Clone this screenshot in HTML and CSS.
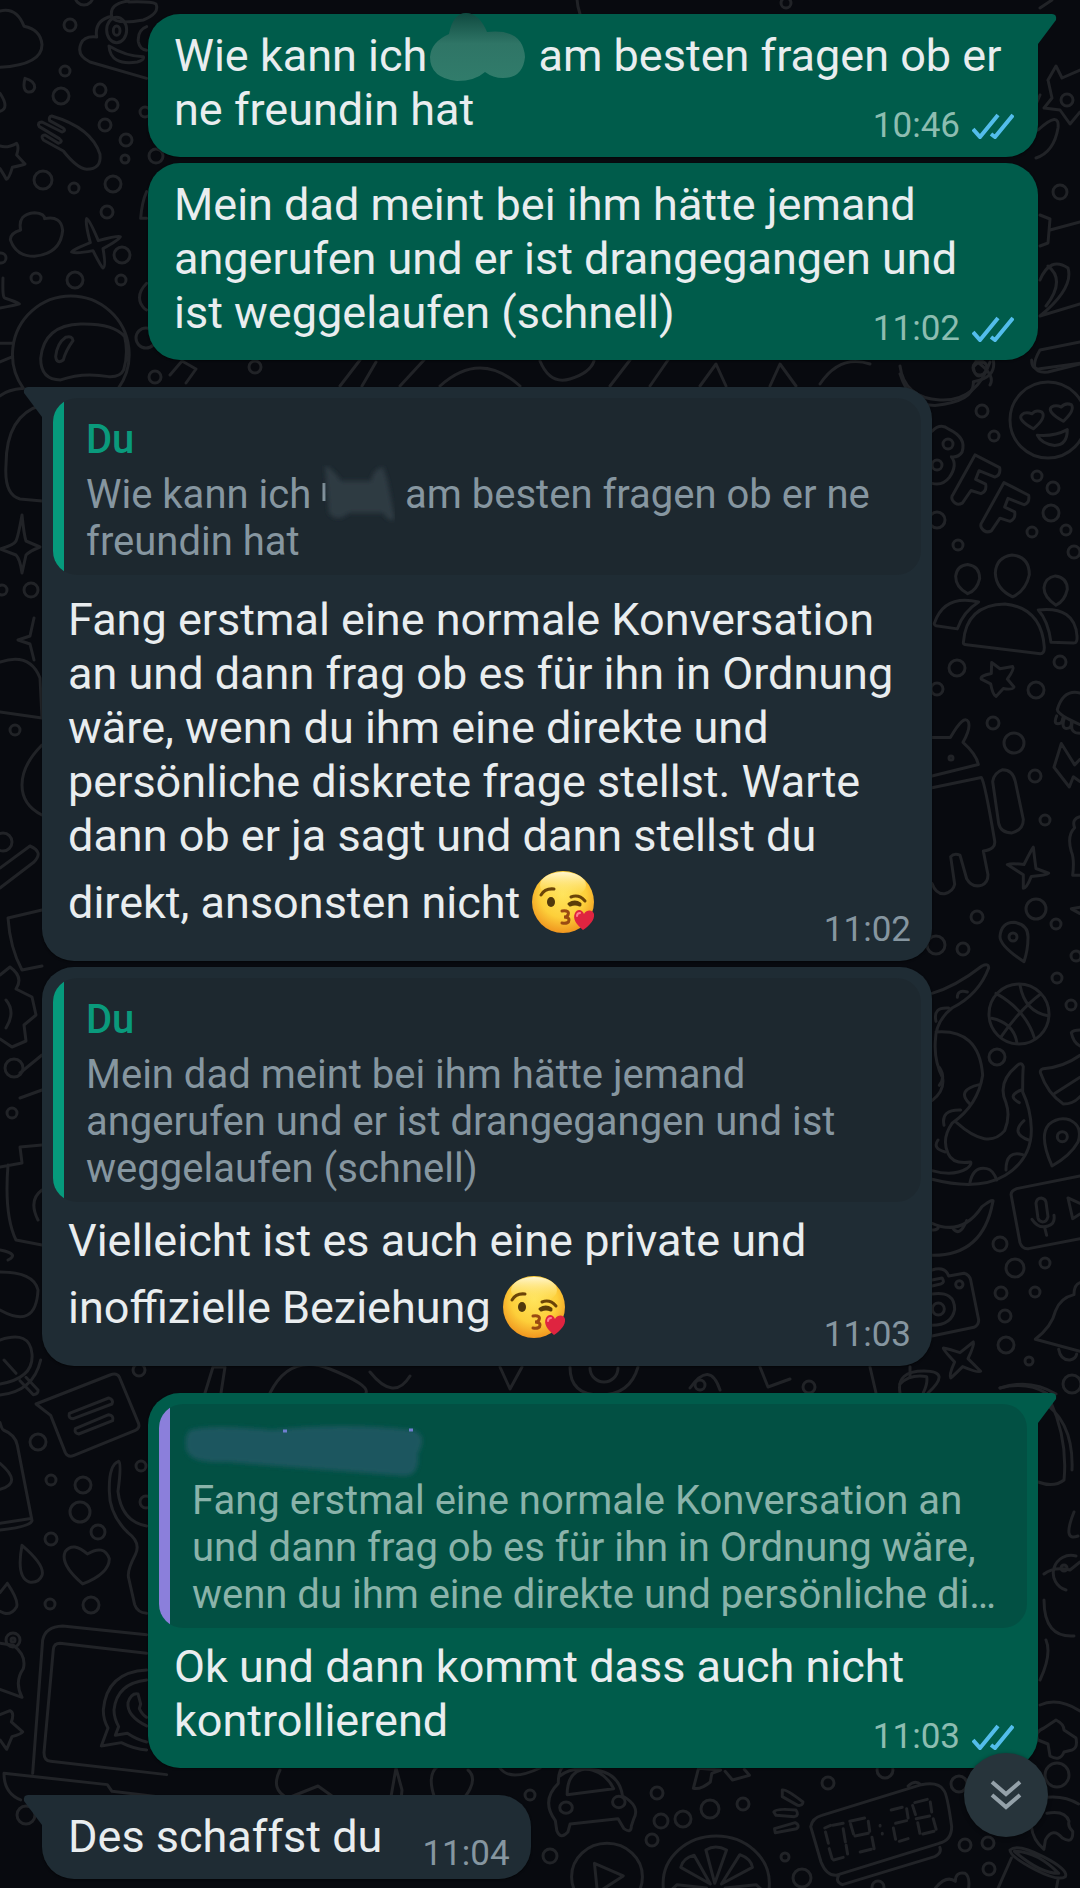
FILE: index.html
```html
<!DOCTYPE html>
<html lang="de">

<head>
    <meta charset="UTF-8"/>
    <meta name="viewport" content="width=device-width, initial-scale=1"/>
    <title>Chat</title>
    <link rel="stylesheet" href="styles.css">
</head>

<body>
<!-- shared icons -->
<svg class="defs" aria-hidden="true">
    <defs>
        <radialGradient id="face" cx="50%" cy="38%" r="62%">
            <stop offset="0" stop-color="#ffe45c"/>
            <stop offset="0.6" stop-color="#fdcf3a"/>
            <stop offset="1" stop-color="#f0961f"/>
        </radialGradient>
        <linearGradient id="shine" x1="0" y1="0" x2="0" y2="1">
            <stop offset="0" stop-color="#fff6cf"/>
            <stop offset="1" stop-color="#ffe45c" stop-opacity="0"/>
        </linearGradient>
        <filter id="soft" x="-10%" y="-20%" width="120%" height="140%">
            <feGaussianBlur stdDeviation="2"/>
        </filter>
        <linearGradient id="smear" x1="0" y1="0" x2="0" y2="1">
            <stop offset="0" stop-color="#0f4a40"/>
            <stop offset="0.45" stop-color="#2f7566"/>
            <stop offset="1" stop-color="#317c6b"/>
        </linearGradient>
    </defs>
    <symbol id="kiss" viewBox="0 0 64 64">
        <circle cx="32" cy="32" r="31" fill="url(#face)"/>
        <ellipse cx="32" cy="15" rx="23" ry="13" fill="url(#shine)"/>
        <path d="M10 25q4-7 13-6M40 27q8-3 14 4" fill="none" stroke="#6b4408" stroke-width="3" stroke-linecap="round"/>
        <ellipse cx="20" cy="32" rx="4" ry="5" fill="#50380c"/>
        <path d="M38 34q6-4 11 0M39 35q5-2 10 0" fill="none" stroke="#5c3d08" stroke-width="3" stroke-linecap="round"/>
        <path d="M31 41q8-1 6 4q-1 2-4 2q5 0 5 3q0 4-7 3" fill="none" stroke="#9a4a12" stroke-width="3" stroke-linecap="round"/>
        <path d="M52 60C46 55 41 49 44 43c2-4 7-4 9 1 3-5 9-4 10 0 1 6-5 12-11 16z" fill="#df2440"/>
        <path d="M46 46q0-3 3-3" fill="none" stroke="#ff8090" stroke-width="2" stroke-linecap="round"/>
    </symbol>
    <symbol id="read" viewBox="0 0 42 26">
        <path d="M1 16l7 8L26 2M19 21l4 3L41 2" fill="none" stroke="#53bdeb" stroke-width="4"/>
    </symbol>
</svg>

<main class="chat">
    <svg class="wallpaper" viewBox="0 0 1080 1888" preserveAspectRatio="xMidYMin slice" aria-hidden="true">
        <!-- dots -->
        <g>
            <circle cx="70" cy="25" r="6"/><circle cx="65" cy="71" r="5"/><circle cx="61" cy="96" r="8"/>
            <circle cx="84" cy="-4" r="9"/><circle cx="100" cy="90" r="6"/><circle cx="112" cy="105" r="6"/>
            <circle cx="105" cy="125" r="6"/><circle cx="126" cy="140" r="6"/><circle cx="125" cy="159" r="4"/>
            <circle cx="156" cy="156" r="7"/><circle cx="43" cy="180" r="9"/><circle cx="74" cy="188" r="5"/>
            <circle cx="113" cy="184" r="8"/><circle cx="107" cy="212" r="6"/><circle cx="122" cy="255" r="8"/>
            <circle cx="36" cy="278" r="5"/><circle cx="75" cy="280" r="8"/><circle cx="121" cy="280" r="5"/>
            <circle cx="146" cy="338" r="10"/><circle cx="155" cy="377" r="6"/><circle cx="1" cy="258" r="5"/>
            <circle cx="255" cy="367" r="6"/><circle cx="145" cy="112" r="5"/><circle cx="786" cy="3" r="5"/>
            <circle cx="1067" cy="100" r="6"/><circle cx="1060" cy="192" r="7"/><circle cx="980" cy="368" r="7"/>
            <circle cx="982" cy="411" r="6"/><circle cx="994" cy="436" r="5"/><circle cx="1037" cy="476" r="5"/>
            <circle cx="1053" cy="488" r="6"/><circle cx="1051" cy="513" r="8"/><circle cx="1032" cy="532" r="5"/>
            <circle cx="1066" cy="530" r="5"/><circle cx="1074" cy="552" r="6"/><circle cx="958" cy="545" r="5"/>
            <circle cx="937" cy="520" r="8"/><circle cx="1060" cy="662" r="6"/><circle cx="957" cy="668" r="8"/>
            <circle cx="1036" cy="690" r="8"/><circle cx="937" cy="689" r="6"/><circle cx="993" cy="723" r="6"/>
            <circle cx="1014" cy="743" r="10"/><circle cx="1035" cy="776" r="6"/><circle cx="1045" cy="820" r="5"/>
            <circle cx="1036" cy="909" r="10"/><circle cx="977" cy="917" r="6"/><circle cx="1056" cy="924" r="5"/>
            <circle cx="936" cy="945" r="9"/><circle cx="963" cy="949" r="6"/><circle cx="1076" cy="956" r="5"/>
            <circle cx="948" cy="444" r="5"/><circle cx="937" cy="465" r="5"/><circle cx="951" cy="758" r="2"/>
            <circle cx="1013" cy="937" r="4"/><circle cx="1057" cy="978" r="5"/><circle cx="1071" cy="1005" r="5"/>
            <circle cx="997" cy="1057" r="8"/><circle cx="1000" cy="1244" r="7"/><circle cx="1015" cy="1268" r="9"/>
            <circle cx="1045" cy="1263" r="5"/><circle cx="1035" cy="1292" r="5"/><circle cx="1001" cy="1293" r="6"/>
            <circle cx="1005" cy="1316" r="6"/><circle cx="1006" cy="1345" r="8"/><circle cx="1029" cy="1361" r="4"/>
            <circle cx="1072" cy="1384" r="9"/><circle cx="31" cy="590" r="7"/><circle cx="15" cy="730" r="5"/>
            <circle cx="3" cy="842" r="9"/><circle cx="2" cy="590" r="5"/><circle cx="14" cy="1068" r="9"/>
            <circle cx="12" cy="1113" r="5"/><circle cx="139" cy="1370" r="6"/><circle cx="38" cy="1442" r="8"/>
            <circle cx="51" cy="1480" r="5"/><circle cx="83" cy="1485" r="8"/><circle cx="80" cy="1512" r="10"/>
            <circle cx="98" cy="1532" r="7"/><circle cx="51" cy="1539" r="6"/><circle cx="50" cy="1604" r="5"/>
            <circle cx="91" cy="1605" r="8"/><circle cx="141" cy="1466" r="5"/><circle cx="146" cy="1502" r="6"/>
            <circle cx="13" cy="1640" r="7"/><circle cx="13" cy="1640" r="2"/><circle cx="26" cy="1815" r="9"/>
            <circle cx="530" cy="1795" r="5"/><circle cx="657" cy="1793" r="6"/><circle cx="661" cy="1821" r="7"/>
            <circle cx="683" cy="1819" r="8"/><circle cx="710" cy="1809" r="9"/><circle cx="743" cy="1804" r="6"/>
            <circle cx="652" cy="1840" r="6"/><circle cx="550" cy="1856" r="7"/><circle cx="785" cy="1857" r="4"/>
            <circle cx="828" cy="1783" r="6"/><circle cx="802" cy="1878" r="9"/><circle cx="885" cy="1770" r="8"/>
            <circle cx="959" cy="1784" r="8"/><circle cx="965" cy="1845" r="6"/><circle cx="988" cy="1843" r="6"/>
            <circle cx="989" cy="1869" r="6"/><circle cx="1057" cy="1775" r="12"/><circle cx="809" cy="1387" r="6"/>
            <circle cx="700" cy="1385" r="5"/><circle cx="1064" cy="1568" r="3"/><circle cx="878" cy="1887" r="6"/>
        </g>
        <!-- top left: cloud, hand, sparkle, astronaut -->
        <g transform="scale(0.3333)">
            <path d="M0 33q50-12 72 46q50 10 54 55q0 60-126 68M0 280q30 45 0 54M75 235q30 8 29 28q-4 15-20 13q-18-5-9-41z"/>
            <path d="M440 235L270 186q-42-20-27-55q10-24 47-20q-8-50 45-62q-8-38 50-46M335 50q10 25 95 10q50-20 38-48q-14-8-82-6M327 138q4 60 85 48q22-6 18-16q-50 0-103-32zM440 80q-28 10-25 45q4 22 25 26"/>
            <ellipse cx="350" cy="90" rx="30" ry="38"/><ellipse cx="350" cy="92" rx="10" ry="14"/>
            <path d="M155 348q120 35 145 115q5 45-40 45q-30-4-70-55l-60-33q-10-14 5-15l40 25q16-4 3-14l-60-36q-8-14 8-14l60 30q14-4 3-12l-40-22q-4-12 6-14z"/>
            <path d="M0 438q20 8 50-8q8 10 0 35l25 27q-10 4-38 10q-10 35-18 36q-6-12-19-32"/>
            <path d="M260 656q8 2 35 66q60-16 66-12q-4 10-52 36q10 55 0 58q-6-4-30-52q-50 10-64 4q6-8 56-28q-16-60-11-72z"/>
            <path d="M62 690q-10-48 42-52q30 2 30 18q50-10 54 35q-6 70-85 78q-55 0-72-50q0-20 31-29zM9 834q-2 60 5 60q36 12 44 18q-10 4-58 12"/>
            <path d="M70 1165a175 175 0 1 1 285 0M182 1140q-60 0-60-65q10-100 120-103q100-2 132 38q12 50-3 100q-10 22-45 20q-80-14-144 10zM190 1080q-20 14-23-10q4-40 30-58q20-6 22 10q-22 30-29 58zM40 1030H0M38 1070L0 1086M70 1165Q20 1170 0 1188M440 575q-14 30-18 80h18M440 850q-30 30-18 60q10 18 18 20"/>
        </g>
        <!-- top right: stars, controller -->
        <path d="M1048 80l8-14 6 12 18-8M1048 80l4 18-8 10 16 2 10 14 10-12M1040 8l12-8M1038 130q22-20 20-2q-4 24-22 30M1040 215l10 4-2 24-8 3M1050 230l30-8M1040 280q10-24 28-12 6 20-28 48l40-12M1040 350l40-8M1040 350q-14 24 8 22l32-8M1040 95l-6 14M1048 266q18 14-2 40M580 14q-10-30 14-34"/>
        <!-- strips between the bubbles -->
        <path d="M170 375l12-14 14 8-10 14M340 386l20-26M362 386l14-24M400 386l24-26M440 386q40-36 80 0M540 361q10 24 30 18t24-18M610 386l20-26M650 386l18-26M700 386l16-22 10 22M770 386l10-22 16 22M820 384q20-30 50-20M900 366q4 32 40 34t50-38M976 361q20 14 14 24"/>
        <path d="M205 1393l8-26h12l-4 26M270 1393q20-40 60-24t36 24M370 1372q24 30 40 4M500 1367l10 22 12-22M570 1367q0 28 30 28t38-28M590 1368a14 14 0 0 0 28 0M690 1388q20-28 30 2M760 1367l8 20 22-8M870 1367l6 26M900 1393q-4-22 24-22t4 22M1000 1388q30-10 56 6"/>
        <!-- right side: smiley, BFF, group, robot -->
        <circle cx="1048" cy="420" r="38"/>
        <g transform="translate(900 360) scale(0.3333 0.3954)">
            <path d="M0 35q30 80 105 80q120-10 115-60q70-10 60-55M220 18q16-18 35-10q14 10-5 28q-24 14-30-18zM395 0q0 26 25 22L540 8"/>
            <path d="M400 174q-50-24-34-36q10-8 30-2q12-12 30-4q14 14-26 42zM490 155q-50-24-36-36q14-6 30 0q12-12 30-6q12 14-24 42zM412 190q50 4 90-14q0 40-38 40q-40-4-52-26z"/>
            <path d="M96 180q26-22 50-5q55 22 40 58q-10 14-32 12q20 20-6 52q-20 22-52 15"/>
            <path d="M225 240l74 32q4 20-14 24l-48-16-10 22 30 12q4 18-14 24l-30-8-26 32q-18 8-30-8q-4-8 2-14zM312 310l74 32q4 20-14 24l-48-16-10 22 30 12q4 18-14 24l-30-8-26 32q-18 8-30-8q-4-8 2-14z"/>
            <path d="M336 493q52 4 52 50q-10 40-50 56q-50-20-52-60q2-40 50-46zM203 517q36 4 36 36q-8 30-36 38q-36-16-36-44q4-28 36-30zM466 546q36 4 36 34q-8 30-34 40q-36-20-36-44q4-26 34-30z"/>
            <path d="M190 715q8-96 125-98q110 10 118 110q0 16-12 16L200 720q-10 0-10-5zM172 680l-64-8q-8-4-4-8q30-72 132-52q-46 24-64 68zM415 632q110-10 116 66q2 18-10 18l-68-2q-8-54-38-82z"/>
            <path d="M275 765l25 16 38-6q6 6-16 32l20 20q-4 8-32 4l-22 20q-10-4-16-32l-28-12q-6-8 30-14z"/>
            <path d="M96 955h55q40-60 54-40q8 16-16 52q40 30 46 56L96 1052M96 1082l148-26q10 10 40 160q4 22-34 26l14 60q0 20-18 26q-30 8-46-16l-20-60q-18-6-28 4l12 70q-4 18-30 24q-26 2-38-26M278 1066q4-22 30-30q30 0 38 30l24 96q0 26-34 34q-34 0-40-24z"/>
            <path d="M400 1232q6 44 8 54l38 12q-8 6-52 8q-14 30-24 30v-34l-48-26q12-4 50 0q20-34 28-44zM372 1522q-72-40-72-64q4-36 42-36q44 6 42 40q0 30-12 60z"/>
            <path d="M540 842q-50-10-68 42q2 14 68 38M470 900q-10 20 4 20t14-14M492 908q-8 24 8 24t14-18M516 920q-6 24 24 24M540 1066l-20-12-12 26-46-50 22-60 40 54 16-14M540 1155q-26 6-16 28q-24 20-10 60q10 20 4 60h22M540 1384l-26 4 26 12"/>
        </g>
        <!-- right side: octopus, ball, voice note, camera, bell -->
        <circle cx="1019" cy="1014" r="30"/>
        <g transform="translate(900 960) scale(0.3333)">
            <path d="M360 75q14 80 84 92M288 100q90 50 116 136M302 232q60-86 120-130M275 175q66 14 76 74"/>
            <path d="M96 100q70-20 150-82q20-10 20 6q-30 80-110 120q-50 40-50 100q-4 60 22 110q6 40-32 68M108 216q130-10 140 130q-14 90-92 144q-32 46-12 90q14 34 68 26q4 8-12 20q-40 24-104 6M96 658q140 36 220-12q80-50 78-140q-2-60-26-110q0-60 2-76q-6-16-20-2q-60 50-32 110q14 40-4 84q-50 60-144-24"/>
            <path d="M108 184q-10-44 38-40M172 112q0-24 30-16M208 430q-40-40 30-56M132 496q-10-48 50-46M136 576q-40-10-22-36M358 428q-40-20 6-38M386 540q-56-20-14-58M318 630q0-60 50-46M210 668q10-50 50-42q20 4 30 34M118 322q20 30 0 54"/>
            <path d="M96 790q90 40 150-50q40-30 32-12q-30 160-182 158M158 804q20 30 42-22M96 810q18 2 20-12M96 930q40-12 50 18l46-8q16 4 20 20l24 120q0 16-14 22L96 1128M96 960l30-6q10 14-4 18l-26 6M96 1002q68-10 68 46q-8 48-68 48"/>
            <circle cx="115" cy="1047" r="18"/><circle cx="178" cy="973" r="11"/>
            <path d="M130 1164q20 4 50 14l40-32q4 8-16 50l38 38q-6 6-54-14q-30 30-36 34q-6-8 12-48q-34-36-34-42z"/>
            <path d="M540 286q-50 36-110 40q-12 4-8 14q20 60 68 92q30 0 50-22M465 400l75-48M540 210q-20 0-26 8q6 30 26 40M456 618q-40-90-10-124q30-26 64-14q40 20 24 66q-22 40-78 72z"/>
            <circle cx="487" cy="530" r="15"/>
            <path d="M540 648l-190 38q-20 8-16 22l26 140q6 20 26 18l154-30M504 714l14 62 22-14M504 714l36 16M408 730q2-16 16-16q12 2 14 12l6 44q-4 16-16 16q-12-2-14-12zM396 778q20 30 48 20q22-6 18-32M434 802l6 24"/>
            <path d="M540 1174l-134-36q50-40 60-84q14-40 56-50q0-30 18-36M476 1168q6 34 34 32q18-4 20-18M0 1272q30-30 80-22q4 20-10 48M30 1220v30M300 1284q80-20 140 16"/>
        </g>
        <!-- left edge, middle -->
        <path d="M42 405q-36 10-36 60q-2 30 14 34l22 2M22 515q2 20 4 26l14 6q-10 4-14 8l-4 18q-2-14-6-18l-16-6q14-4 16-8t6-26M0 662q30-10 40 16l2 40L0 712M42 745q-20 20-20 40t20 30M34 618l-4 18-12 4 12 4 4 16M0 868l30-22q14 6 4 16L0 888M42 910l-34 8q2 30 14 52l20-4M0 975l10-8q14 10 6 22l16 8 4 18-12 10 2 16-14 6-12-8M6 1000q10 12 0 28M42 1055l-22 18M42 1090l-22 8M42 1145l-22 2 2 16-22 4M8 1165q-4 50 8 75l26 5M42 1190q-14 10-4 30M0 1250q20 4 8 10M0 1272q34 0 38 18-2 40-38 20M0 1340q30-10 32 14t-32 30"/>
        <!-- bottom left: note, drops, heart, laptop -->
        <g transform="translate(0 1360) scale(0.3333)">
            <path d="M108 132L330 45q20-8 28 6l58 140q4 14-10 20L222 286q-18 8-26-8L152 166zM208 160l118-46q16 4 10 18l-116 44q-16 0-12-16zM226 206l100-42q16 2 12 18l-102 40q-14-2-10-16z"/>
            <path d="M0 105q100-10 122-105M12 0l36 40M60 62l40 42q16-2 14-14L78 52M0 188q6 20 10 22q36 14 42 46l44 226q-4 18-96 28M0 490l88-14M0 310q70 60 0 78"/>
            <path d="M356 304q10 2-2 90q10 90 86 104M356 304q-30 10-28 90q0 70 56 124q40 30 22 66q-26 50-20 70l18 80q8 24 36 26"/>
            <path d="M66 556q70 60 60 90q-10 24-38 20q-40-14-22-110zM22 670q34 50 28 70q-14 24-36 20L0 754M22 670L0 698M248 672q-70-60-52-98q24-30 66 8q50-30 66 14q0 44-80 76z"/>
            <path d="M0 850l40 6q40 30 30 70q-28 40-4 86l-66-24M0 1064l30-12q14 6 4 34l34 30q-4 6-32 14l-16 38-20-28"/>
            <path d="M98 1240l30-400q8-40 60-42L440 824M440 880L180 850q-18 0-20 18l-28 310q0 24 20 26L500 1244M12 1240l310 34 14 20 200 24M12 1240q0 60 50 80"/>
            <path d="M440 930q-120 6-130 120q0 30 14 54l-20 54 60-10q40 20 76 22M440 960q-90 10-98 90q0 24 14 50l-10 26 36-6q30 20 58 26M440 1098q-60-30-56-70q10-30 30-26q8 30 8 30l-4 14q10 20 22 26"/>
        </g>
        <!-- bottom: cloud, heart, car, clock, orange -->
        <path d="M280 1770q-10 20 8 28l30-12 14 10 22 28h40M320 1830q-4-36 18-30q20 4 46 30M396 1768l-8 46 12-4 2-20zM444 1818q-22-40-6-52M444 1818q40-34 24-48M500 1768q10 14 40 0"/>
        <g transform="translate(500 1750) scale(0.369 0.3333)">
            <path d="M162 78q30-26 70-20q90 0 100 80q50 30 30 70l-6 20q0 24-20 8l-16-30-130 16-6 24q-20 24-30-4l-4-30q-40-60 8-112q0-40 14-52M182 134q0-74 54-78q50 10 72 60zM524 115l14-60 60 5-24 10-4 26q-26 24-46 19zM610 64l20 26 46-14-14-18"/>
            <circle cx="179" cy="173" r="17"/><circle cx="322" cy="156" r="17"/>
            <path d="M765 120q10-4 56 36q0 12-14 10l-42-26zM742 186q4-12 60-6q10 16-4 20l-50-4zM744 236l56-18q14 8 4 18l-58 12z"/>
            <path d="M842 230q4-26 30-34l270-92q46-10 60 16q10 10 22 110q0 40-34 50L910 376q-26 0-40-40zM1106 108q20-20 34-4M918 376q-10 20 10 28l250-84q20-10 14-28"/>
            <path d="M880 234l16-8M902 226l28-6M930 236l6 40M882 246l8 34M892 296l8 30M904 330l26-8M938 286l4 26M948 214l40-10M950 222l8 30M998 214l4 30M962 258l36-8M1008 262l6 34M976 306l30-8M1030 226v2M1036 250v2M1060 180l30-8M1102 176l4 28M1072 220l30-8M1066 234l6 34M1082 274l24-8M1124 158l34-10M1118 166l8 28M1166 156l4 30M1128 206l36-8M1132 218l6 32M1174 206l8 32M1146 252l30-8"/>
            <ellipse cx="290" cy="380" rx="96" ry="100"/>
            <path d="M256 340l78 38-70 50z"/>
            <ellipse cx="586" cy="400" rx="144" ry="142"/>
            <path d="M582 400l-24-100q26-18 56 0zM570 402l-80-50q6-28 36-36zM600 402l84-50q-4-26-34-38zM560 414l-80-10-12 12M610 414l84-10 12 12"/>
            <path d="M1180 414q30-40 54-20q0-30 26-24q14 10 10 44M1350 414l36-90M1512 390l-4 24M1382 300q20-20 90 20q70 40 60 60q-20 14-80-20q-70-40-70-60zM1394 304q60 0 120 66q-50 0-120-66z"/>
            <path d="M1480 142q50-6 88 20M1440 230q4 40 34 68l4-28q20-40 46-6q30 20 28-20q-14-14-10-30q-10-34-60-24"/>
        </g>
        <path d="M1040 1705q18-8 40 6M1044 1728l12-8q8 4 8 10l12 8q2 10-4 12l-8 2q-4 10-14 4l-2-12-10-4q-4-8 6-12M1050 1400q18 40 14 80-10 8-26 2M1040 1400q34 20 32 70M1074 1512q-12 30 4 24M1044 1574q10-8 26-4l10-8M1044 1600q0 38 30 36M1046 1640q6 14-6 40M1066 1590a14 14 0 1 1 10-34"/>
    </svg>

    <section class="group">
        <article class="bubble out tail">
            <div class="body">
                <p class="text">Wie kann ich<svg class="smear" width="100" height="70" viewBox="0 0 100 70" aria-hidden="true"><path d="M22 22Q26 1 39 1T60 20Q96 16 98 45Q96 66 76 66Q66 66 58 60Q48 69 30 69Q3 66 3 45Q4 30 22 22Z" fill="url(#smear)"/></svg> am besten fragen ob er ne freundin hat</p>
                <div class="meta"><time>10:46</time><svg class="ticks" role="img" aria-label="Gelesen"><use href="#read"/></svg></div>
            </div>
        </article>
        <article class="bubble out">
            <div class="body">
                <p class="text">Mein dad meint bei ihm hätte jemand angerufen und er ist drangegangen und ist weggelaufen (schnell)</p>
                <div class="meta"><time>11:02</time><svg class="ticks" role="img" aria-label="Gelesen"><use href="#read"/></svg></div>
            </div>
        </article>
    </section>

    <section class="group">
        <article class="bubble in tail">
            <blockquote class="quote two-lines">
                <h2 class="name">Du</h2>
                <p>Wie kann ich <svg class="smear small" width="74" height="58" viewBox="0 0 74 58" aria-hidden="true"><path d="M3 18v18" stroke="#8696a0" stroke-width="3"/><path d="M4 0Q14 6 20 16H50Q52 4 62 2L66 14L74 54Q68 58 62 48H28Q16 58 8 48Z" fill="#2e3b43" filter="url(#soft)"/></svg> am besten fragen ob er ne freundin hat</p>
            </blockquote>
            <div class="body">
                <p class="text">Fang erstmal eine normale Konversation an und dann frag ob es für ihn in Ordnung wäre, wenn du ihm eine direkte und persönliche diskrete frage stellst. Warte dann ob er ja sagt und dann stellst du direkt, ansonsten nicht <svg class="emoji" role="img" aria-label="Kuss"><use href="#kiss"/></svg></p>
                <div class="meta"><time>11:02</time></div>
            </div>
        </article>
        <article class="bubble in">
            <blockquote class="quote">
                <h2 class="name">Du</h2>
                <p>Mein dad meint bei ihm hätte jemand angerufen und er ist drangegangen und ist weggelaufen (schnell)</p>
            </blockquote>
            <div class="body">
                <p class="text">Vielleicht ist es auch eine private und inoffizielle Beziehung <svg class="emoji" role="img" aria-label="Kuss"><use href="#kiss"/></svg></p>
                <div class="meta"><time>11:03</time></div>
            </div>
        </article>
    </section>

    <section class="group">
        <article class="bubble out tail">
            <blockquote class="quote">
                <h2 class="name"><svg class="hidden-name" viewBox="0 0 250 58" aria-hidden="true"><path d="M8 8Q30 2 90 8Q160 0 232 8Q246 14 236 32Q238 54 222 54Q140 48 44 40Q6 42 4 26Q2 14 8 8Z" fill="#1b565e" filter="url(#soft)"/><path d="M101 9h4M227 8h4" stroke="#6f7fd0" stroke-width="3"/></svg></h2>
                <p>Fang erstmal eine normale Konversation an und dann frag ob es für ihn in Ordnung wäre, wenn du ihm eine direkte und persönliche di…</p>
            </blockquote>
            <div class="body">
                <p class="text">Ok und dann kommt dass auch nicht kontrollierend</p>
                <div class="meta"><time>11:03</time><svg class="ticks" role="img" aria-label="Gelesen"><use href="#read"/></svg></div>
            </div>
        </article>
    </section>

    <section class="group">
        <article class="bubble in tail short">
            <div class="body">
                <p class="text">Des schaffst du</p>
                <div class="meta"><time>11:04</time></div>
            </div>
        </article>
    </section>

    <button class="scroll-down" type="button" aria-label="Nach unten">
        <svg width="32" height="30" viewBox="0 0 32 30" aria-hidden="true">
            <path d="M2 2l14 12L30 2M2 15l14 12 14-12" fill="none" stroke="#94a1a9" stroke-width="4"/>
        </svg>
    </button>
</main>
</body>

</html>
```
FILE: styles.css
```css
* {
    margin: 0;
    padding: 0;
    box-sizing: border-box;
}

body {
    background: #080a0f;
    color: #e9edef;
    font-family: Roboto, "Noto Sans", sans-serif;
    font-size: 45px;
    line-height: 54px;
}

.defs {
    position: absolute;
    width: 0;
    height: 0;
}

.chat {
    position: relative;
    display: flex;
    flex-direction: column;
    gap: 27px;
    min-height: 100vh;
    padding: 14px 42px 8px;
    overflow: hidden;
}

.wallpaper {
    position: absolute;
    top: 0;
    left: 0;
    width: 100%;
    height: 100%;
    fill: none;
    stroke: #212327;
    stroke-width: 3px;
    stroke-linejoin: round;
    stroke-linecap: round;
}

.wallpaper * {
    vector-effect: non-scaling-stroke;
}

.group {
    position: relative;
    display: flex;
    flex-direction: column;
    gap: 6px;
}

/* bubbles */
.bubble {
    position: relative;
    padding-top: 15px;
    border-radius: 32px;
    box-shadow: 0 1px 2px rgba(0, 0, 0, 0.5);
}

.bubble:has(.quote) {
    padding-top: 11px;
}

.out {
    margin-left: 106px;
    background: #005c4b;
}

.in {
    margin-right: 106px;
    background: #1f2c34;
}

.out.tail {
    border-top-right-radius: 0;
}

.in.tail {
    border-top-left-radius: 0;
}

.tail::after {
    content: "";
    position: absolute;
    top: 0;
    left: 100%;
    width: 19px;
    height: 30px;
    background: #005c4b;
    clip-path: path("M0 0H14Q19 0 18 6L0 30Z");
}

.in.tail::after {
    left: auto;
    right: 100%;
    background: #1f2c34;
    transform: scaleX(-1);
}

/* text and time share one cell, the time sits in its corner */
.body {
    display: grid;
    padding: 0 21px 0 26px;
}

.text {
    grid-area: 1 / 1;
    padding-bottom: 20px;
}

.meta {
    grid-area: 1 / 1;
    place-self: end;
    display: flex;
    align-items: center;
    gap: 12px;
    margin-bottom: 11px;
    color: #8696a0;
    font-size: 35px;
    line-height: 40px;
}

.out .meta {
    margin-right: 3px;
    color: #8dbdb1;
}

.ticks {
    width: 42px;
    height: 26px;
}

.short {
    align-self: flex-start;
}

.short .body {
    grid-template-columns: auto auto;
    gap: 40px;
}

.short .text {
    padding-bottom: 15px;
}

.short .meta {
    grid-area: 1 / 2;
    margin-bottom: 5px;
}

/* quoted message */
.quote {
    margin: 0 11px 12px;
    padding: 18px 20px 10px 33px;
    border-radius: 24px;
    background: linear-gradient(to right, #069a7c 11px, #1d282f 11px);
    color: #8696a0;
    font-size: 40px;
    line-height: 47px;
}

.two-lines {
    margin-bottom: 18px;
}

.out .quote {
    background: linear-gradient(to right, #8b7fdb 11px, #025043 11px);
    color: #8ab3aa;
}

.name {
    height: 47px;
    margin-bottom: 8px;
    color: #0a9a7c;
    font-size: 40px;
    font-weight: 500;
}

.hidden-name {
    display: block;
    width: 250px;
    height: 58px;
    margin-left: -10px;
}

/* smudges stand in the line without making it taller */
.smear {
    margin: -30px 0;
    vertical-align: 19px;
}

.small {
    vertical-align: 15px;
}

.emoji {
    width: 64px;
    height: 64px;
    margin: 7px 0;
    vertical-align: -23px;
}

.scroll-down {
    position: fixed;
    right: 32px;
    bottom: 51px;
    display: flex;
    align-items: center;
    justify-content: center;
    width: 84px;
    height: 84px;
    border: 0;
    border-radius: 50%;
    background: #27343b;
    box-shadow: 0 1px 4px rgba(0, 0, 0, 0.4);
    cursor: pointer;
}
```
